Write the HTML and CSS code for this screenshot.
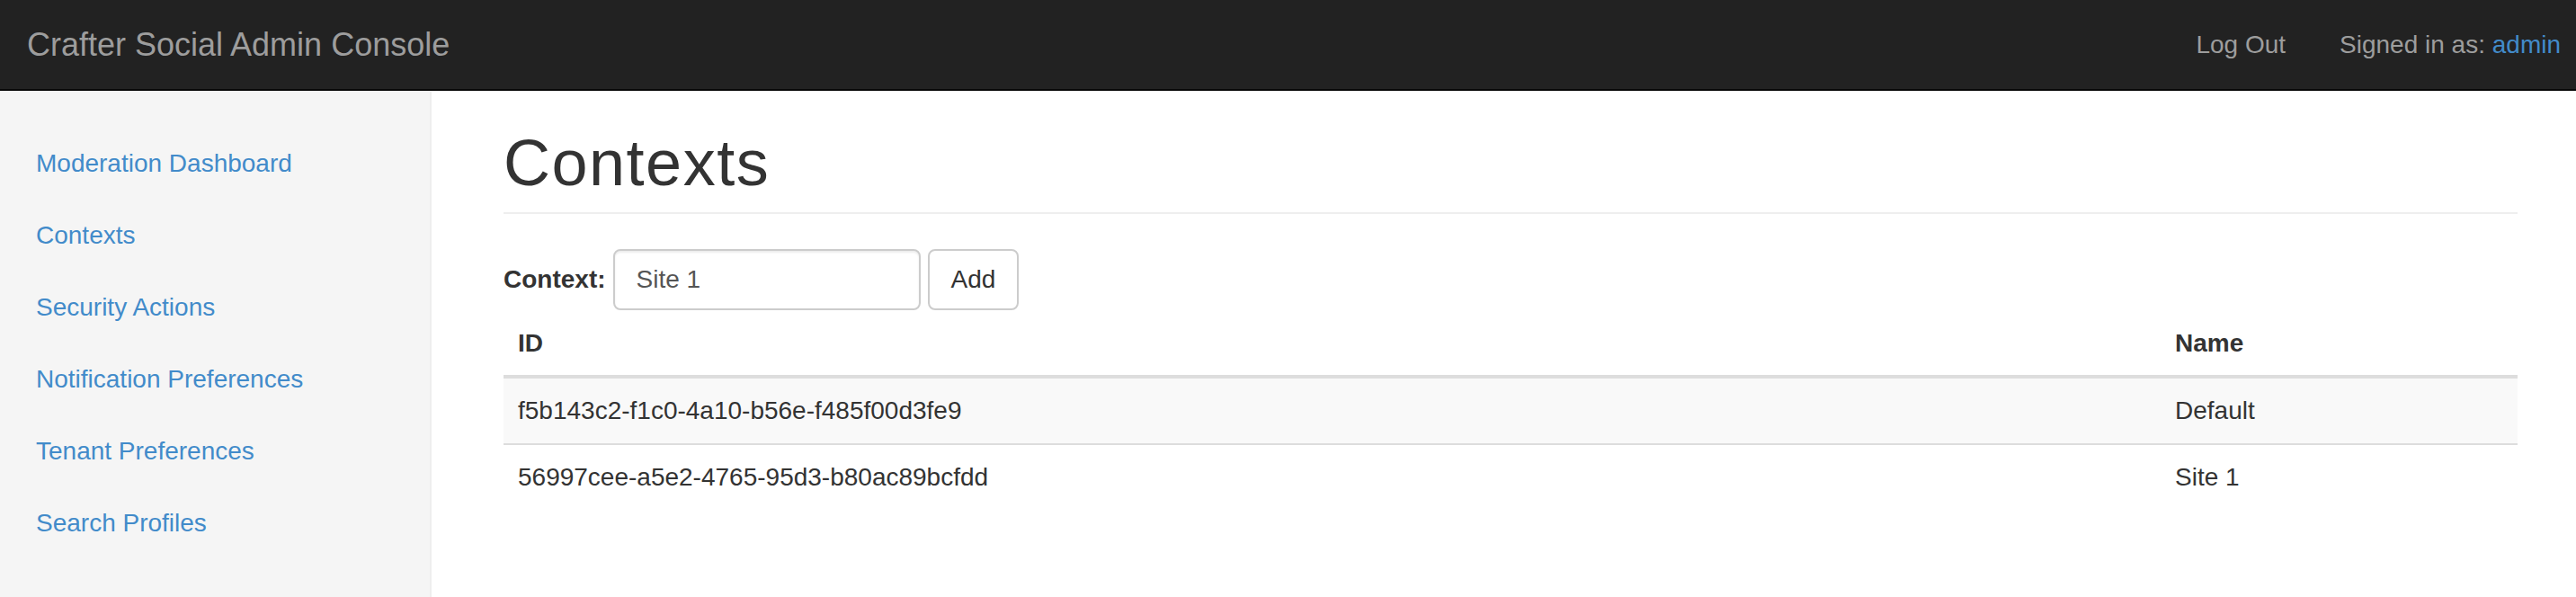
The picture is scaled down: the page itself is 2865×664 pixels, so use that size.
FILE: index.html
```html
<!DOCTYPE html>
<html lang="en">
<head>
<meta charset="utf-8">
<title>Crafter Social Admin Console</title>
<link rel="stylesheet" href="styles.css">
</head>
<body>
<header class="navbar">
  <a class="brand" href="#">Crafter Social Admin Console</a>
  <div class="navbar-right">
    <a class="nav-link" href="#">Log Out</a>
    <p class="navbar-text">Signed in as: <a class="user-link" href="#">admin</a></p>
  </div>
</header>
<div class="layout">
  <aside class="sidebar">
    <ul class="side-nav">
      <li><a href="#">Moderation Dashboard</a></li>
      <li><a href="#">Contexts</a></li>
      <li><a href="#">Security Actions</a></li>
      <li><a href="#">Notification Preferences</a></li>
      <li><a href="#">Tenant Preferences</a></li>
      <li><a href="#">Search Profiles</a></li>
    </ul>
  </aside>
  <main class="main">
    <h1 class="page-header">Contexts</h1>
    <form class="context-form">
      <label class="form-label" for="ctx">Context:</label>
      <input class="form-input" id="ctx" type="text" value="Site 1">
      <button class="btn" type="button">Add</button>
    </form>
    <table class="table">
      <thead>
        <tr><th>ID</th><th class="col-name">Name</th></tr>
      </thead>
      <tbody>
        <tr class="odd"><td>f5b143c2-f1c0-4a10-b56e-f485f00d3fe9</td><td>Default</td></tr>
        <tr><td>56997cee-a5e2-4765-95d3-b80ac89bcfdd</td><td>Site 1</td></tr>
      </tbody>
    </table>
  </main>
</div>
</body>
</html>
```

FILE: styles.css
```css
* { box-sizing: border-box; }

html, body {
  margin: 0;
  padding: 0;
}

body {
  font-family: "Liberation Sans", Arial, Helvetica, sans-serif;
  font-size: 28px;
  line-height: 40px;
  color: #333;
  background: #fff;
}

a { text-decoration: none; }

.navbar {
  display: flex;
  align-items: flex-start;
  justify-content: space-between;
  height: 101px;
  background: #222;
  border-bottom: 2px solid #080808;
}

.brand {
  display: block;
  padding: 30px 30px 29px 30px;
  font-size: 36px;
  line-height: 40px;
  color: #9d9d9d;
}

.navbar-right {
  display: flex;
  align-items: flex-start;
  padding-right: 17px;
}

.nav-link {
  display: block;
  padding: 30px 30px;
  line-height: 40px;
  color: #9d9d9d;
}

.navbar-text {
  margin: 30px 0 0 30px;
  line-height: 40px;
  color: #9d9d9d;
}

.user-link { color: #428bca; }

.layout {
  display: flex;
  min-height: calc(100vh - 101px);
}

.sidebar {
  flex: 0 0 480px;
  background: #f5f5f5;
  border-right: 2px solid #eee;
  padding-top: 41px;
}

.side-nav {
  list-style: none;
  margin: 0;
  padding: 0;
}

.side-nav a {
  display: block;
  padding: 20px 40px;
  line-height: 40px;
  color: #428bca;
}

.main {
  flex: 1 1 auto;
  padding: 41px 65px 0 80px;
}

.page-header {
  margin: 0;
  padding-bottom: 15px;
  border-bottom: 2px solid #eee;
  font-size: 72px;
  line-height: 79px;
  font-weight: 500;
  letter-spacing: 1.5px;
  color: #333;
}

.context-form {
  display: flex;
  align-items: center;
  gap: 8px;
  margin: 39px 0 0;
}

.form-label {
  font-weight: bold;
  line-height: 40px;
}

.form-input {
  width: 342px;
  height: 68px;
  padding: 0 24px;
  font-family: "Liberation Sans", Arial, sans-serif;
  font-size: 28px;
  color: #555;
  background: #fff;
  border: 2px solid #ccc;
  border-radius: 8px;
  box-shadow: inset 0 2px 2px rgba(0, 0, 0, 0.075);
  outline: none;
}

.btn {
  height: 68px;
  padding: 0 24px;
  font-family: "Liberation Sans", Arial, sans-serif;
  font-size: 28px;
  color: #333;
  background: #fff;
  border: 2px solid #ccc;
  border-radius: 8px;
}

.table {
  width: 100%;
  margin-top: 1px;
  border-collapse: collapse;
  border-spacing: 0;
}

.table th {
  text-align: left;
  font-weight: bold;
  padding: 16px 16px 15px;
  line-height: 40px;
  vertical-align: bottom;
  border-bottom: 4px solid #ddd;
}

.table th.col-name { width: 397px; }

.table td {
  padding: 16px;
  line-height: 40px;
  border-top: 2px solid #ddd;
}

.table tbody tr.odd td { background: #f9f9f9; }
```
